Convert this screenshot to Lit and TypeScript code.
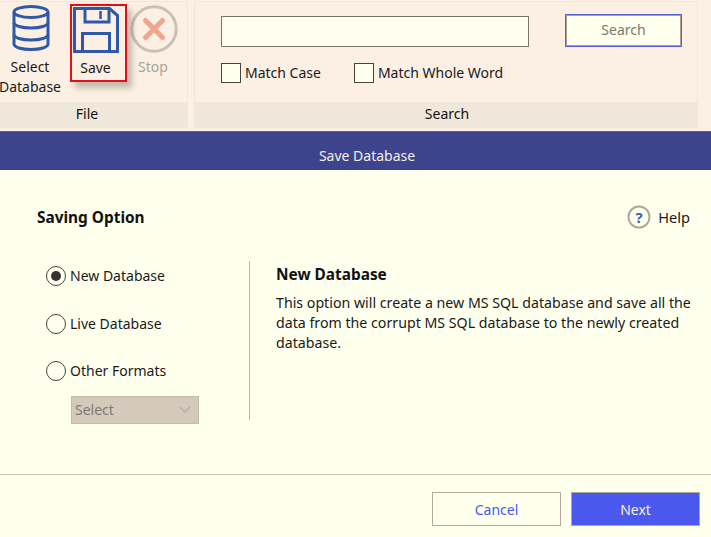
import { LitElement, html, css } from 'lit';
import { customElement } from 'lit/decorators.js';

@customElement('app-root')
export class AppRoot extends LitElement {
  static styles = css`
    :host {
      display: block;
      width: 711px;
      height: 537px;
      overflow: hidden;
      background: #ffffee;
      font-family: 'Noto Sans', 'Open Sans', sans-serif;
      font-size: 14px;
      color: #1a1a1a;
    }
    .ribbon {
      height: 131px;
      box-sizing: border-box;
      background: #fbf0e3;
      display: flex;
      gap: 6px;
      padding-top: 1px;
      padding-bottom: 3px;
    }
    .group {
      display: flex;
      flex-direction: column;
      border: 1px solid #f0e8dc;
      border-radius: 2px;
    }
    .file { width: 188px; box-sizing: border-box; border-left: 0; }
    .search { width: 504px; box-sizing: border-box; }
    .group-body { flex: 1; position: relative; display: flex; }
    .group-label {
      height: 25px;
      background: #efe7da;
      text-align: center;
      line-height: 24px;
      color: #111;
    }
    .file .group-label { padding-right: 13px; }
    .search .group-label { padding-left: 2px; }
    .tools { display: flex; height: 100%; }
    .tool {
      display: flex;
      flex-direction: column;
      align-items: center;
      line-height: 20px;
      text-align: center;
    }
    .tool svg { display: block; }
    .select-db { width: 60px; padding-top: 3px; margin-right: 10px; }
    .select-db svg { margin-left: 2px; }
    .select-db span { margin-top: 6px; white-space: nowrap; }
    .save {
      width: 57px;
      height: 78px;
      box-sizing: border-box;
      margin-top: 2px;
      border: 2px solid #e0101a;
      box-shadow: 5px 6px 6px rgba(90, 85, 70, 0.35);
      background: #fbf0e3;
      position: relative;
      padding-right: 6px;
    }
    .save svg { margin-top: 1px; }
    .save span { margin-top: 5px; }
    .stop { width: 50px; padding-top: 3px; margin-left: 2px; color: #a8a49c; }
    .stop span { margin-top: 4px; margin-right: 2px; }
    .search-body { padding: 14px 15px 0 26px; display: flex; gap: 36px; }
    .search-left { width: 308px; }
    .text-input {
      height: 31px;
      box-sizing: border-box;
      width: 308px;
      background: #ffffee;
      border: 1px solid #7d7468;
    }
    .checks { display: flex; margin-top: 16px; gap: 33px; }
    .check { display: flex; align-items: center; gap: 4px; height: 20px; line-height: 20px; }
    .box {
      width: 20px;
      height: 20px;
      box-sizing: border-box;
      background: #ffffee;
      border: 1px solid #4a433c;
    }
    .search-btn {
      width: 117px;
      height: 33px;
      margin-top: -2px;
      box-sizing: border-box;
      background: #ffffee;
      border: 2px solid #a89f8e;
      outline: 1px solid #5a5fd8;
      outline-offset: -1px;
      color: #7d7870;
      text-align: center;
      line-height: 28px;
    }
    .title-bar {
      height: 39px;
      box-sizing: border-box;
      background: #3d438c;
      border-top: 1px solid #4a63c8;
      color: #f2f0e6;
      text-align: center;
      font-size: 14px;
      line-height: 48px;
      padding-left: 23px;
    }
    .content { height: 305px; box-sizing: border-box; padding: 35px 21px 0 37px; border-bottom: 1px solid #c9c2b2; }
    .content-head { display: flex; justify-content: space-between; align-items: center; height: 24px; }
    .heading { font-weight: 700; font-size: 15.4px; color: #111; }
    .help { display: flex; align-items: center; gap: 7px; font-size: 14.6px; }
    .columns { display: flex; margin-top: 32px; }
    .options {
      flex: none;
      width: 213px;
      height: 159px;
      border-right: 1px solid #bdb6a6;
      box-sizing: border-box;
      padding: 5px 0 0 9px;
    }
    .radio-row { display: flex; align-items: center; gap: 4px; height: 20px; margin-bottom: 27.5px; line-height: 20px; }
    .radio {
      width: 20px;
      height: 20px;
      box-sizing: border-box;
      border: 1px solid #4a433c;
      border-radius: 50%;
      display: flex;
      align-items: center;
      justify-content: center;
    }
    .radio i { width: 10px; height: 10px; border-radius: 50%; background: #35312c; }
    .format-select {
      width: 128px;
      height: 28px;
      margin: -13px 0 0 25px;
      box-sizing: border-box;
      background: #d4cabc;
      border: 1px solid #c4bbab;
      color: #7f7a74;
      display: flex;
      align-items: center;
      justify-content: space-between;
      padding: 0 7px 0 3px;
    }
    .detail { flex: none; padding-left: 26px; width: 425px; }
    .detail h3 { margin: 0 0 8px; font-size: 15.4px; font-weight: 700; line-height: 20px; color: #111; padding-top: 4px; }
    .detail p { margin: 0; line-height: 20px; font-size: 14.2px; }
    .footer { display: flex; justify-content: flex-end; gap: 10px; padding: 17px 11px 0 0; }
    .btn {
      width: 129px;
      height: 34px;
      box-sizing: border-box;
      border: 1px solid #b1aa9a;
      text-align: center;
      line-height: 33px;
    }
    .cancel { color: #4a58ee; background: #ffffee; }
    .next { color: #f0f0e8; background: #4a58ee; }
  `;

  render() {
    return html`
      <div class="ribbon">
        <div class="group file">
          <div class="group-body">
            <div class="tools">
              <div class="tool select-db">
                <svg width="38" height="46" viewBox="0 0 38 46" fill="none" stroke="#2f58a8" stroke-width="3">
                  <ellipse cx="19" cy="7" rx="17" ry="5.5"/>
                  <path d="M2 7v32c0 3.3 7.6 5.5 17 5.5s17-2.2 17-5.5V7"/>
                  <path d="M2 17.500c0 3.300 7.600 5.500 17 5.500s17-2.200 17-5.500"/>
                  <path d="M2 29.500c0 3.300 7.600 5.500 17 5.500s17-2.200 17-5.500"/>
                </svg>
                <span>Select<br />Database</span>
              </div>
              <div class="tool save">
                <svg width="46" height="46" viewBox="0 0 46 46" fill="none" stroke="#2f58a8" stroke-width="3">
                  <path d="M1.500 1.500h35l8 7v36h-43z"/>
                  <path d="M12 1.500V15h24V1.500"/>
                  <path d="M27.500 4v8" stroke-width="2.500"/>
                  <path d="M9.500 44.500V26.500h27v18"/>
                </svg>
                <span>Save</span>
              </div>
              <div class="tool stop">
                <svg width="48" height="48" viewBox="0 0 48 48" fill="none">
                  <circle cx="24" cy="24" r="22.200" stroke="#c8c2b6" stroke-width="3"/>
                  <path d="M15.500 15.500l17 17M32.500 15.500l-17 17" stroke="#f2a58e" stroke-width="5" stroke-linecap="round"/>
                </svg>
                <span>Stop</span>
              </div>
            </div>
          </div>
          <div class="group-label">File</div>
        </div>
        <div class="group search">
          <div class="group-body search-body">
            <div class="search-left">
              <div class="text-input"></div>
              <div class="checks">
                <div class="check"><div class="box"></div>Match Case</div>
                <div class="check"><div class="box"></div>Match Whole Word</div>
              </div>
            </div>
            <div class="search-btn">Search</div>
          </div>
          <div class="group-label">Search</div>
        </div>
      </div>
      <div class="title-bar">Save Database</div>
      <div class="content">
        <div class="content-head">
          <div class="heading">Saving Option</div>
          <div class="help">
            <svg width="24" height="24" viewBox="0 0 24 24" fill="none">
              <circle cx="12" cy="12" r="10.500" stroke="#b3a697" stroke-width="2"/>
              <text x="12" y="17.500" text-anchor="middle" font-family="Noto Sans, sans-serif" font-size="15" font-weight="700" fill="#3f62b0">?</text>
            </svg>
            Help
          </div>
        </div>
        <div class="columns">
          <div class="options">
            <div class="radio-row"><div class="radio"><i></i></div>New Database</div>
            <div class="radio-row"><div class="radio"></div>Live Database</div>
            <div class="radio-row"><div class="radio"></div>Other Formats</div>
            <div class="format-select">
              Select
              <svg width="12" height="7" viewBox="0 0 12 7" fill="none" stroke="#b3ab9f" stroke-width="1.200"><path d="M1 1l5 5 5-5"/></svg>
            </div>
          </div>
          <div class="detail">
            <h3>New Database</h3>
            <p>This option will create a new MS SQL database and save all the data from the corrupt MS SQL database to the newly created database.</p>
          </div>
        </div>
      </div>
      <div class="footer">
        <div class="btn cancel">Cancel</div>
        <div class="btn next">Next</div>
      </div>
    `;
  }
}
